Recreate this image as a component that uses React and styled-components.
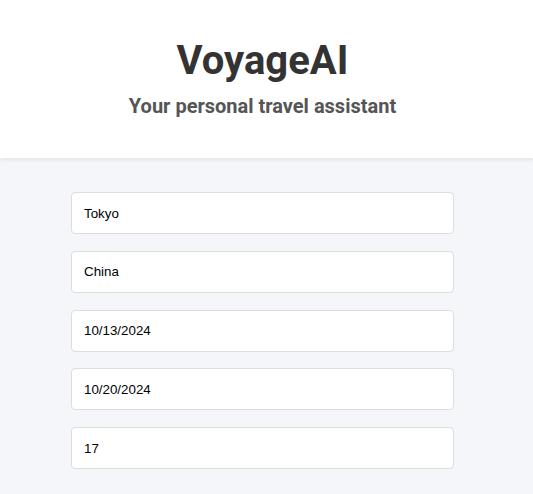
import styled, { createGlobalStyle } from "styled-components";

const Global = createGlobalStyle`
  html, body {
    margin: 0;
    padding: 0;
    background: #f5f6fa;
    font-family: Roboto, "Liberation Sans", sans-serif;
  }
`;

const Header = styled.header`
  background: #ffffff;
  height: 158px;
  box-sizing: border-box;
  padding: 37px 8px 0 0;
  text-align: center;
  box-shadow: 0 2px 4px rgba(0, 0, 0, 0.08);
  position: relative;
`;

const Title = styled.h1`
  margin: 0;
  font-size: 40px;
  font-weight: 700;
  color: #333333;
  line-height: 48px;
`;

const Subtitle = styled.h2`
  margin: 9px 0 0;
  font-size: 20px;
  font-weight: 700;
  color: #555555;
  line-height: 24px;
`;

const Main = styled.main`
  padding: 34px 79px 0 71px;
  height: 336px;
  box-sizing: border-box;
  overflow: hidden;
`;

const Form = styled.form`
  display: flex;
  flex-direction: column;
  gap: 16.75px;
`;

const Input = styled.input`
  box-sizing: border-box;
  width: 100%;
  height: 42px;
  padding: 0 12px;
  border: 1px solid #dddddd;
  border-radius: 4px;
  background: #ffffff;
  font-family: "Liberation Sans", Arial, sans-serif;
  font-size: 13.33px;
  color: #000000;
  outline: none;
`;

const values = ["Tokyo", "China", "10/13/2024", "10/20/2024", "17"];

export default function App() {
  return (
    <>
      <Global />
      <Header>
        <Title>VoyageAI</Title>
        <Subtitle>Your personal travel assistant</Subtitle>
      </Header>
      <Main>
        <Form>
          {values.map((v) => (
            <Input key={v} defaultValue={v} />
          ))}
        </Form>
      </Main>
    </>
  );
}
